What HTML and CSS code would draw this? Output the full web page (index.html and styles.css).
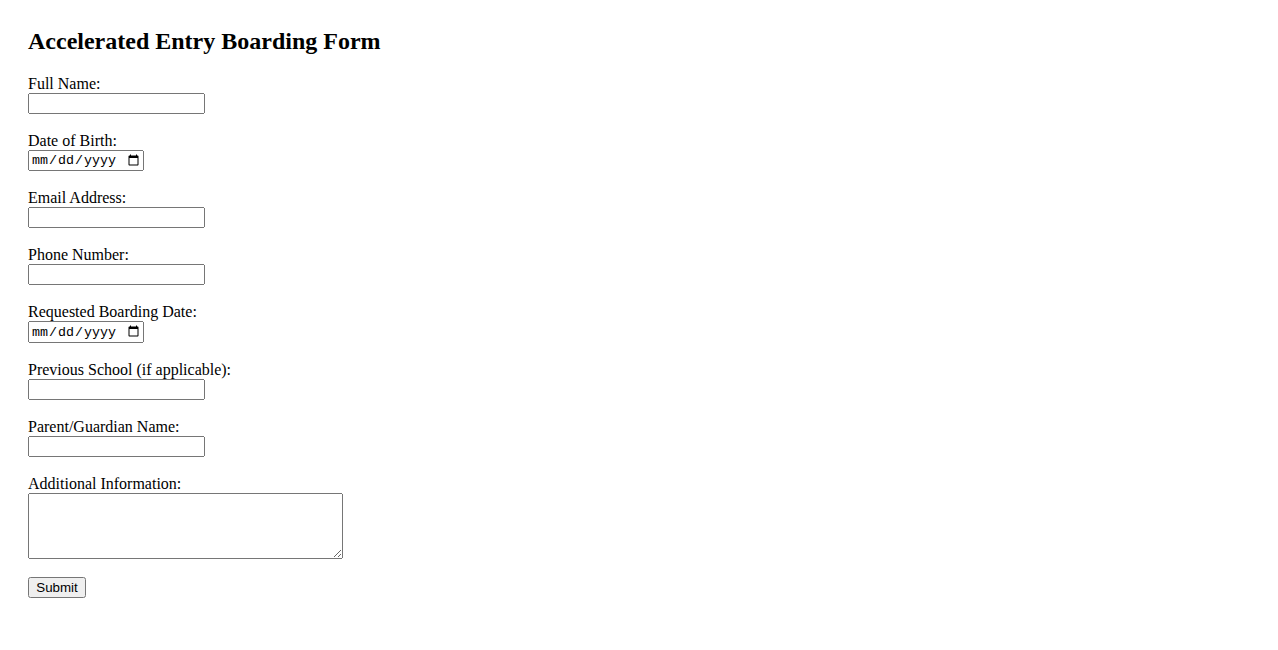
FILE: index.html
```html
<!DOCTYPE html>
<html>
<head>
<meta charset="utf-8">
<title>Accelerated Entry Boarding Form</title>
<link rel="stylesheet" href="styles.css">
</head>
<body>
<div class="page">
<h2 class="title">Accelerated Entry Boarding Form</h2>
<form class="form">
<label for="name">Full Name:</label><br>
<input type="text" id="name" class="field"><br><br>
<label for="dob">Date of Birth:</label><br>
<input type="date" id="dob" class="date"><br><br>
<label for="email">Email Address:</label><br>
<input type="email" id="email" class="field"><br><br>
<label for="phone">Phone Number:</label><br>
<input type="tel" id="phone" class="field"><br><br>
<label for="bdate">Requested Boarding Date:</label><br>
<input type="date" id="bdate" class="date"><br><br>
<label for="school">Previous School (if applicable):</label><br>
<input type="text" id="school" class="field"><br><br>
<label for="parent">Parent/Guardian Name:</label><br>
<input type="text" id="parent" class="field"><br><br>
<label for="info">Additional Information:</label><br>
<textarea id="info" class="area" rows="4" cols="40"></textarea><br><br>
<input type="submit" value="Submit" class="submit">
</form>
</div>
</body>
</html>
```

FILE: styles.css
```css
body {
  margin: 8px;
  font-family: "Liberation Serif", "Times New Roman", serif;
  font-size: 16px;
  color: #000;
  background: #fff;
}
.page {
  padding: 20px;
}
.title {
  margin: 0 0 19.92px 0;
  font-size: 24px;
  font-weight: bold;
}
.field {
  font-family: "Liberation Sans", Arial, sans-serif;
  font-size: 13.333px;
  width: 177px;
  height: 21px;
  box-sizing: border-box;
}
.date {
  font-family: "Liberation Mono", monospace;
  font-size: 13.333px;
  width: 116px;
  height: 21.5px;
  box-sizing: border-box;
}
.area {
  width: 315px;
  height: 66px;
  box-sizing: border-box;
  vertical-align: bottom;
}
.submit {
  font-family: "Liberation Sans", Arial, sans-serif;
  font-size: 13.333px;
  width: 58px;
  height: 21px;
}
```
